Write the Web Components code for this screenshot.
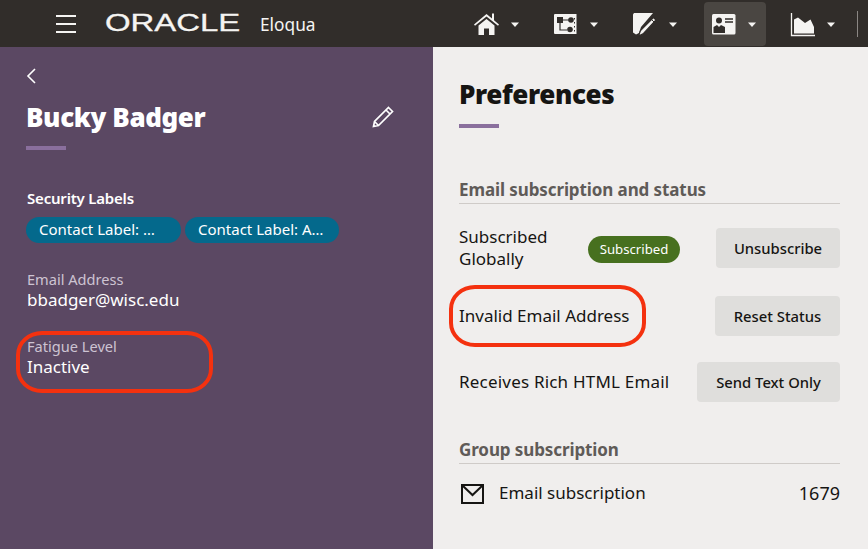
<!doctype html>
<html><head><meta charset="utf-8">
<style>
html,body{margin:0;height:549px;overflow:hidden;font-family:"Noto Sans","Open Sans",sans-serif}
body{display:flex;flex-direction:column}
app-body{flex:1}
</style></head>
<body>
<app-header></app-header>
<app-body>
  <contact-panel></contact-panel>
  <prefs-panel></prefs-panel>
</app-body>

<script>
const def=(n,html)=>customElements.define(n,class extends HTMLElement{constructor(){super();this.attachShadow({mode:'open'}).innerHTML=html}});

const caret='<svg width="10" height="6" viewBox="0 0 10 6"><path d="M1 .5h8L5 5z" fill="#f5f4f2"/></svg>';
def('nav-item',`<style>
:host{display:flex;align-items:center;width:62px;height:44px;border-radius:4px;box-sizing:border-box;padding-left:7px;gap:11px}
:host([active]){background:#4a4642}
.i{width:25px;height:24px;display:flex}
.c{display:flex;margin-top:2px}
</style><span class="i"><slot></slot></span><span class="c">${caret}</span>`);

def('app-header',`<style>
:host{display:flex;align-items:center;height:47px;background:#312d2a;color:#fff;flex:none;box-sizing:border-box;padding-left:56px}
.burger{width:20px;height:18px;display:flex;flex-direction:column;justify-content:space-between}
.burger i{display:block;height:2px;background:#f5f4f2}
.logo{width:136px;margin-left:29px;height:20px;font:400 23.500px/20px "Liberation Sans",sans-serif;transform:scaleX(1.4);transform-origin:0 50%;color:#f5f4f2;margin-top:-2px;-webkit-text-stroke:.3px #f5f4f2}
.eq{font-size:17.300px;margin-left:19px;color:#f5f4f2;width:207px;margin-top:1px;white-space:nowrap}
nav{display:flex;gap:17px;margin-top:1px}
.sep{width:1px;height:26px;background:#8b8784;margin-left:12px}
svg{display:block}
</style>
<div class="burger"><i></i><i></i><i></i></div>
<div class="logo">ORACLE</div>
<div class="eq">Eloqua</div>
<nav>
<nav-item><svg width="25" height="24" viewBox="0 0 25 24"><path d="M0 12.500 12.500 2 18 6.500V1.500h2v6.800L25 12.500l-1 1.200L12.500 4.500 1 13.700z" fill="#f5f4f2"/><path d="M4.500 13.500 12.500 7l8 6.500V23h-5.500v-6.500h-5V23H4.500z" fill="#f5f4f2"/></svg></nav-item>
<nav-item><svg width="25" height="24" viewBox="0 0 25 24"><path fill="#f5f4f2" d="M2 2h21.500v20H2a1 1 0 0 1-1-1V3a1 1 0 0 1 1-1z"/><rect x="4" y="5" width="6" height="6" fill="#312d2a"/><path d="M10 8h6M7 11v7h7" stroke="#312d2a" stroke-width="1.200" fill="none"/><circle cx="18" cy="8" r="2.800" fill="#312d2a"/><circle cx="17" cy="17.500" r="2.800" fill="#312d2a"/><path d="M21.500 6v1.500M21.500 10v1.500M21.500 14v1.500M21.500 18v1.500" stroke="#312d2a" stroke-width="1"/></svg></nav-item>
<nav-item><svg width="25" height="25" viewBox="0 0 25 25"><path d="M2 1h19l-12 14-2 6-3 1.500-3-2V2.500z" fill="#f5f4f2"/><path d="M21.500 5.500 24 8 11.500 21.500 6.500 24 8.500 18.500z" fill="#f5f4f2" stroke="#312d2a" stroke-width="1.200"/><path d="M19.500 7.500 22 10" stroke="#312d2a" stroke-width="1"/></svg></nav-item>
<nav-item active><svg width="25" height="24" viewBox="0 0 25 24"><rect x="1" y="2" width="23.500" height="20.500" rx="1.500" fill="#f5f4f2"/><circle cx="8" cy="8.500" r="3" fill="#312d2a"/><path d="M2.500 21v-6l3.500-2 2 2 2-2 4 2v6z" fill="#312d2a"/><path d="M14 7h8M14 10h8" stroke="#312d2a" stroke-width="1.400"/></svg></nav-item>
<nav-item><svg width="25" height="25" viewBox="0 0 25 25"><path d="M1.500 1v22.500H25" fill="none" stroke="#f5f4f2" stroke-width="1.300"/><path d="M4 21.500V7.500l4-2 7 5.500 5.500-3.500L24 15v6.500z" fill="#f5f4f2"/></svg></nav-item>
</nav>
<div class="sep"></div>`);

def('accent-bar',`<style>:host{display:block;width:40px;height:4px;background:#8a6f9d}</style>`);
def('red-ring',`<style>:host{position:absolute;box-sizing:border-box;border:4px solid #f4310f;border-radius:26px/24px;pointer-events:none}</style>`);

def('info-field',`<style>
:host{display:block}
.l{font-size:14.600px;line-height:19px;color:#cdc3d2}
.v{font-size:17px;line-height:22px;color:#fff}
</style><div class="l"><slot name="label"></slot></div><div class="v"><slot></slot></div>`);

def('label-chip',`<style>:host{display:block;height:26px;border-radius:13px;background:#04698c;color:#fff;font-size:15px;line-height:25px;padding-left:13px;box-sizing:border-box;white-space:pre}</style><slot></slot>`);

def('contact-panel',`<style>
:host{position:relative;display:block;width:433px;height:100%;background:#5b4863;color:#fff;box-sizing:border-box;padding:21px 0 0 27px}
.back{display:block;margin-left:-1px}
.title{display:flex;align-items:center;margin-top:11px;height:44px}
h1{margin:0;font-size:26px;line-height:36px;font-weight:900;letter-spacing:-.4px;width:345px;margin-left:-1px}
accent-bar{margin:7px 0 0 -1px}
h2{margin:38px 0 0;font-size:15px;line-height:20px;font-weight:600;letter-spacing:-.2px}
.chips{display:flex;gap:4px;margin:9px 0 0 -1px}
label-chip:first-child{width:155px}
label-chip:last-child{width:154px}
info-field{margin-top:27px}
info-field.b{margin-top:26px}
red-ring{left:16px;top:284px;width:197px;height:62px}
</style>
<svg class="back" width="10" height="16" viewBox="0 0 10 16"><path d="M9 1 2 8l7 7" fill="none" stroke="#fff" stroke-width="1.600"/></svg>
<div class="title"><h1>Bucky Badger</h1>
<svg width="24" height="24" viewBox="0 0 24 24"><path d="M17.500 2.500 21.500 6.500 7.500 20.500 2.500 21.500 3.500 16.500zM15 5l4 4M3.500 16.500l4 4" fill="none" stroke="#fff" stroke-width="1.700"/></svg></div>
<accent-bar></accent-bar>
<h2>Security Labels</h2>
<div class="chips"><label-chip>Contact Label: …</label-chip><label-chip>Contact Label: A…</label-chip></div>
<info-field><span slot="label">Email Address</span>bbadger@wisc.edu</info-field>
<info-field class="b"><span slot="label">Fatigue Level</span>Inactive</info-field>
<red-ring></red-ring>`);

def('action-button',`<style>:host{display:flex;align-items:center;justify-content:center;height:40px;border-radius:4px;background:#dfdedc;color:#161513;font-size:14.800px;font-weight:500;box-sizing:border-box;white-space:nowrap;flex:none;padding-bottom:1px}</style><slot></slot>`);

def('section-head',`<style>:host{display:block;font-size:17px;line-height:24px;font-weight:700;color:#5f5b58;border-bottom:1px solid #cfcbc8;padding-bottom:1px;letter-spacing:-.1px}</style><slot></slot>`);

def('pref-row',`<style>:host{display:flex;align-items:center;justify-content:space-between;font-size:17px;line-height:22px;color:#161513}</style><slot></slot>`);

def('prefs-panel',`<style>
:host{position:relative;display:block;flex:1;background:#f0eeed;box-sizing:border-box;padding:27px 28px 0 26px;color:#161513}
h1{margin:0;font-size:26px;line-height:40px;font-weight:900;letter-spacing:-.4px;color:#161513}
accent-bar{margin-top:10px}
section-head{margin-top:50px}
.first{margin-top:24px;height:40px}
.second{margin-top:28px;height:40px}
.third{margin-top:26px;height:40px}
.third div:first-child{letter-spacing:.2px}
.g{margin-top:36px}
.status{width:92px;height:27px;border-radius:14px;background:#47701f;color:#fff;font-size:13.200px;line-height:26px;text-align:center;margin:2px 36px 0 auto}
.s{width:110px;margin-top:0}
.mail{margin-top:17px}
.mail span{flex:1;margin-left:15px}
.mail svg{margin-left:2px;margin-top:3px;flex:none}
.num{font-size:18px}
red-ring{left:16px;top:238px;width:197px;height:62px}
</style>
<h1>Preferences</h1>
<accent-bar></accent-bar>
<section-head>Email subscription and status</section-head>
<pref-row class="first"><div class="s">Subscribed Globally</div><div class="status">Subscribed</div><action-button style="width:124px">Unsubscribe</action-button></pref-row>
<pref-row class="second"><div>Invalid Email Address</div><action-button style="width:125px">Reset Status</action-button></pref-row>
<pref-row class="third"><div>Receives Rich HTML Email</div><action-button style="width:143px">Send Text Only</action-button></pref-row>
<section-head class="g">Group subscription</section-head>
<pref-row class="mail"><svg width="23" height="20" viewBox="0 0 23 20"><path d="M1 1h21v18H1z" fill="none" stroke="#161513" stroke-width="2"/><path d="M1.500 1.500 11.500 11l10-9.500" fill="none" stroke="#161513" stroke-width="2"/></svg><span>Email subscription</span><div class="num">1679</div></pref-row>
<red-ring></red-ring>`);

def('app-body',`<style>:host{display:flex;height:502px;min-height:0}</style><slot></slot>`);
</script>
</body></html>
